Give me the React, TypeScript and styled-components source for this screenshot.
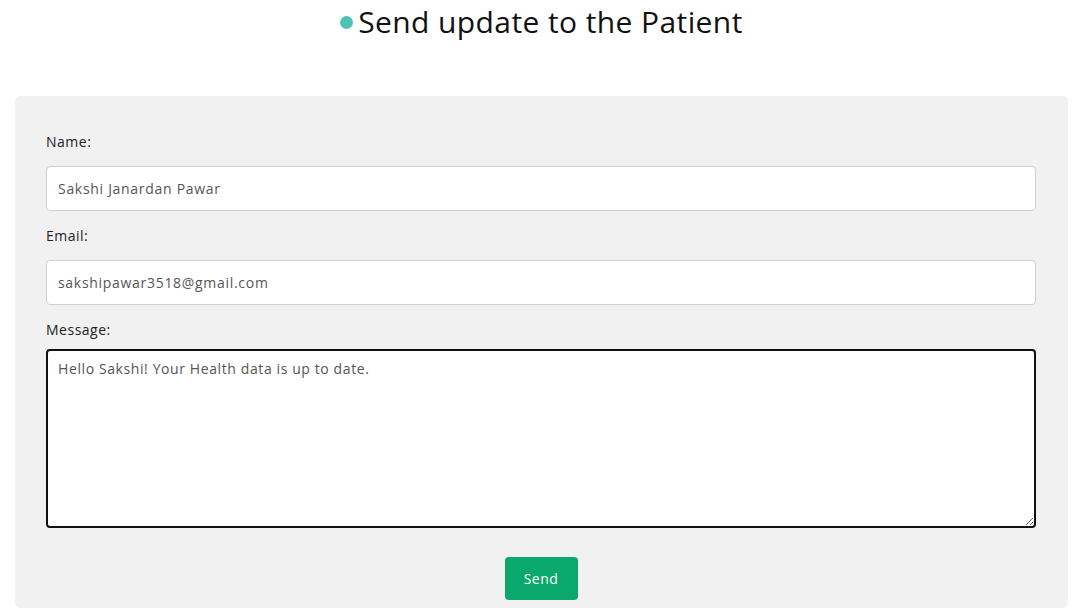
import React, { useState } from 'react';
import styled, { createGlobalStyle } from 'styled-components';

const GlobalStyle = createGlobalStyle`
    body {
        margin: 0;
        background: #ffffff;
        font-family: 'Open Sans', 'Liberation Sans', sans-serif;
        color: #1a1a1a;
    }
`;

const Page = styled.div`
    padding: 0 10px 0 15px;
`;

const Title = styled.h2`
    display: flex;
    align-items: center;
    justify-content: center;
    gap: 5px;
    margin: 0;
    height: 96px;
    padding-bottom: 54px;
    box-sizing: border-box;
    font-size: 30px;
    font-weight: 400;
    letter-spacing: 0.4px;
    color: #111;
`;

const Dot = styled.span`
    width: 13px;
    height: 13px;
    border-radius: 50%;
    background: #4cc4b4;
    margin-top: 3px;
`;

const Card = styled.form`
    background: #f1f1f1;
    border-radius: 5px;
    padding: 36px 32px 8px 31px;
    display: flex;
    flex-direction: column;
`;

const Label = styled.label`
    font-size: 14px;
    line-height: 20px;
    letter-spacing: 0.5px;
    color: #222;
    margin-bottom: 14px;
`;

const Field = styled.input`
    height: 45px;
    box-sizing: border-box;
    border: 1px solid #cfcfcf;
    border-radius: 4px;
    background: #fff;
    padding: 0 11px;
    font-family: inherit;
    font-size: 14px;
    letter-spacing: 0.7px;
    color: #555;
    margin-bottom: 15px;
    outline: none;
`;

const MessageArea = styled.textarea`
    height: 179px;
    box-sizing: border-box;
    border: 2px solid #111;
    border-radius: 4px;
    background: #fff;
    padding: 8px 10px;
    font-family: inherit;
    font-size: 14px;
    letter-spacing: 0.6px;
    color: #555;
    resize: vertical;
    outline: none;
    margin-top: -5px;
`;

const SendButton = styled.button`
    align-self: center;
    margin-top: 29px;
    width: 73px;
    height: 43px;
    border: none;
    border-radius: 4px;
    background: #0aa86c;
    color: #fff;
    font-family: inherit;
    font-size: 14px;
    letter-spacing: 0.5px;
    cursor: pointer;
`;

const App = () => {
    const [name, setName] = useState('Sakshi Janardan Pawar');
    const [email, setEmail] = useState('sakshipawar3518@gmail.com');
    const [message, setMessage] = useState('Hello Sakshi! Your Health data is up to date.');

    return (
        <Page>
            <GlobalStyle />
            <Title>
                <Dot />
                Send update to the Patient
            </Title>
            <Card onSubmit={e => e.preventDefault()}>
                <Label htmlFor='name'>Name:</Label>
                <Field id='name' value={name} onChange={e => setName(e.target.value)} />
                <Label htmlFor='email'>Email:</Label>
                <Field id='email' value={email} onChange={e => setEmail(e.target.value)} />
                <Label htmlFor='message'>Message:</Label>
                <MessageArea id='message' value={message} onChange={e => setMessage(e.target.value)} />
                <SendButton type='submit'>Send</SendButton>
            </Card>
        </Page>
    );
};

export default App;
